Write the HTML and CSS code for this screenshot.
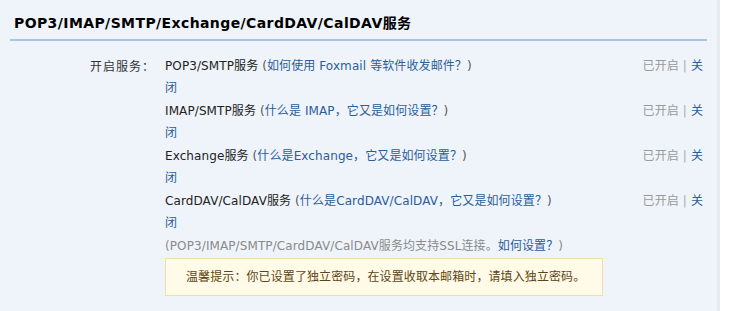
FILE: index.html
```html
<!DOCTYPE html>
<html lang="zh-CN">
<head>
<meta charset="utf-8">
<title>POP3/IMAP/SMTP/Exchange/CardDAV/CalDAV服务</title>
<link rel="stylesheet" href="styles.css">
</head>
<body>
<div class="panel">
  <h2 class="title">POP3/IMAP/SMTP/Exchange/CardDAV/CalDAV服务</h2>
  <div class="form-row">
    <div class="label">开启服务：</div>
    <div class="field">
      <div class="svc">
        <div class="svc-line">
          <span class="desc">POP3/SMTP服务 <span class="paren">(</span><a class="link">如何使用 Foxmail 等软件收发邮件？</a><span class="paren">)</span></span>
          <span class="state">已开启 <span class="sep">|</span> <a class="link">关</a></span>
        </div>
        <div class="svc-line"><a class="link">闭</a></div>
      </div>
      <div class="svc">
        <div class="svc-line">
          <span class="desc">IMAP/SMTP服务 <span class="paren">(</span><a class="link">什么是 IMAP，它又是如何设置？</a><span class="paren">)</span></span>
          <span class="state">已开启 <span class="sep">|</span> <a class="link">关</a></span>
        </div>
        <div class="svc-line"><a class="link">闭</a></div>
      </div>
      <div class="svc">
        <div class="svc-line">
          <span class="desc">Exchange服务 <span class="paren">(</span><a class="link">什么是Exchange，它又是如何设置？</a><span class="paren">)</span></span>
          <span class="state">已开启 <span class="sep">|</span> <a class="link">关</a></span>
        </div>
        <div class="svc-line"><a class="link">闭</a></div>
      </div>
      <div class="svc">
        <div class="svc-line">
          <span class="desc">CardDAV/CalDAV服务 <span class="paren">(</span><a class="link">什么是CardDAV/CalDAV，它又是如何设置？</a><span class="paren">)</span></span>
          <span class="state">已开启 <span class="sep">|</span> <a class="link">关</a></span>
        </div>
        <div class="svc-line"><a class="link">闭</a></div>
      </div>
      <div class="ssl">(POP3/IMAP/SMTP/CardDAV/CalDAV服务均支持SSL连接。<a class="link">如何设置？</a>)</div>
      <div class="tip">温馨提示：你已设置了独立密码，在设置收取本邮箱时，请填入独立密码。</div>
    </div>
  </div>
</div>
</body>
</html>
```
FILE: styles.css
```css
html, body {
  margin: 0;
  padding: 0;
  background: #ffffff;
}
body {
  font-family: "DejaVu Sans", Verdana, "Noto Sans CJK SC", sans-serif;
  font-size: 12px;
  color: #333333;
}
.panel {
  width: 720px;
  height: 311px;
  box-sizing: border-box;
  background: #eff4fb;
  border-right: 3px solid #e6ebf1;
  padding: 14px 0 0 10px;
}
.title {
  margin: 0;
  width: 697px;
  box-sizing: border-box;
  padding: 0 0 7px 4px;
  font-size: 14px;
  font-weight: bold;
  letter-spacing: 0.4px;
  line-height: 18px;
  color: #000000;
  border-bottom: 2px solid #a9c3e3;
}
.form-row {
  display: flex;
  margin-top: 14px;
}
.label {
  box-sizing: border-box;
  width: 160px;
  padding-left: 80px;
  line-height: 22px;
  color: #333333;
  letter-spacing: 1px;
  font-family: "Noto Sans CJK SC", sans-serif;
}
.field {
  width: 540px;
  margin-left: -5px;
  letter-spacing: 0.1px;
}
.svc {
  margin-bottom: 1px;
}
.svc-line {
  display: flex;
  justify-content: space-between;
  line-height: 22px;
}
.desc {
  color: #222222;
}
.paren {
  color: #555555;
}
.link {
  color: #2a5d9a;
  text-decoration: none;
}
.state {
  color: #999999;
  padding-right: 2px;
}
.sep {
  color: #aaaaaa;
}
.ssl {
  line-height: 22px;
  color: #8a8a8a;
}
.tip {
  margin-top: 1px;
  width: 438px;
  height: 38px;
  box-sizing: border-box;
  border: 1px solid #f2dfa6;
  background: #fffbe8;
  color: #5e4512;
  line-height: 36px;
  padding-left: 20px;
}
```
